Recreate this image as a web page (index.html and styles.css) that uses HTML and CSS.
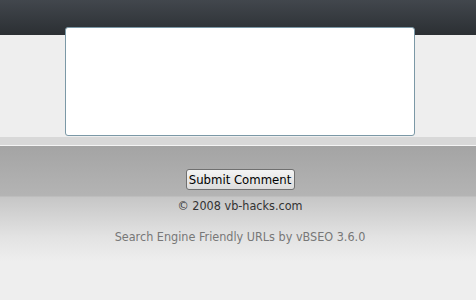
FILE: index.html
```html
<!DOCTYPE html>
<html>
<head>
<meta charset="utf-8">
<link rel="stylesheet" href="styles.css">
</head>
<body>
<div class="top">
  <textarea class="comment"></textarea>
</div>
<div class="band"></div>
<div class="footer">
  <button class="submit" type="button">Submit Comment</button>
  <div class="copy">© 2008 vb-hacks.com</div>
  <div class="seo">Search Engine Friendly URLs by vBSEO 3.6.0</div>
</div>
</body>
</html>
```
FILE: styles.css
```css
html, body {
  margin: 0;
  padding: 0;
  background: #eeeeee;
  font-family: "DejaVu Sans Condensed", "DejaVu Sans", Verdana, sans-serif;
}
.top {
  height: 137px;
  background: linear-gradient(to bottom, #42474d 0, #2b2f33 35px, #eeeeee 35px);
  display: flex;
  justify-content: center;
  align-items: flex-start;
}
.comment {
  box-sizing: border-box;
  margin: 27px 0 0 4px;
  width: 350px;
  height: 109px;
  border: 1px solid #7b98a6;
  border-radius: 3px;
  background: #ffffff;
  resize: none;
  padding: 2px;
}
.band {
  height: 8px;
  background: #d8d8d8;
  border-bottom: 1px solid #f4f4f4;
}
.footer {
  height: 154px;
  background: linear-gradient(to bottom, #a4a4a4 0, #b4b4b4 50px, #c6c6c6 51px, #e2e2e2 90px, #eeeeee 115px, #eeeeee 100%);
  display: flex;
  flex-direction: column;
  align-items: center;
  padding-top: 23px;
  padding-left: 4px;
  box-sizing: border-box;
}
.submit {
  font-family: "DejaVu Sans Condensed", "DejaVu Sans", sans-serif;
  font-size: 13px;
  color: #000;
  height: 21px;
  width: 109px;
  padding: 0;
  border: 1px solid #707070;
  border-radius: 3px;
  background: linear-gradient(to bottom, #f4f4f4, #dcdcdc);
}
.copy {
  margin-top: 8px;
  font-size: 12.5px;
  color: #333333;
  line-height: 16px;
}
.seo {
  margin-top: 15px;
  font-size: 12.5px;
  color: #777777;
  line-height: 16px;
}
```
